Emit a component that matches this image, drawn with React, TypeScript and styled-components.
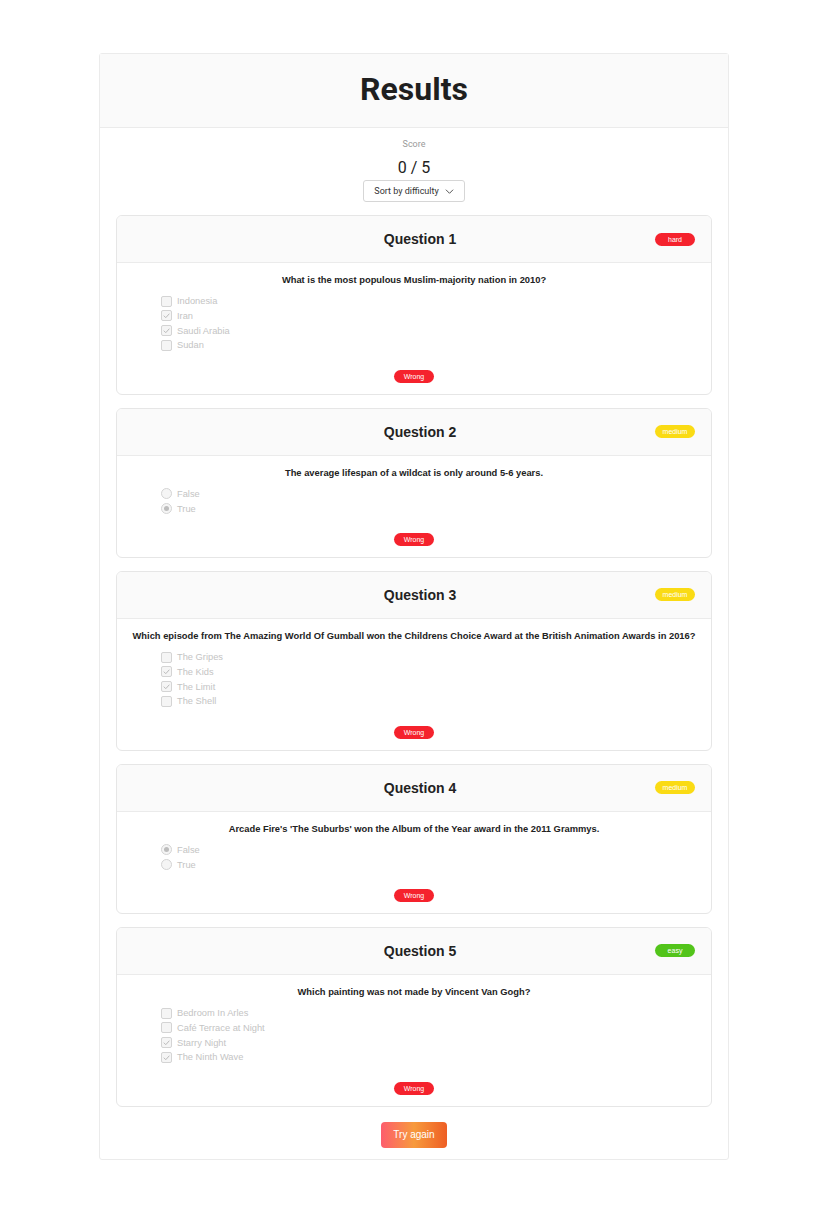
import styled, { createGlobalStyle } from 'styled-components';

type Difficulty = 'easy' | 'medium' | 'hard';

interface Question {
  id: number;
  difficulty: Difficulty;
  text: string;
  kind: 'multiple' | 'boolean';
  options: { label: string; checked: boolean }[];
}

const questions: Question[] = [
  {
    id: 1,
    difficulty: 'hard',
    text: 'What is the most populous Muslim-majority nation in 2010?',
    kind: 'multiple',
    options: [
      { label: 'Indonesia', checked: false },
      { label: 'Iran', checked: true },
      { label: 'Saudi Arabia', checked: true },
      { label: 'Sudan', checked: false },
    ],
  },
  {
    id: 2,
    difficulty: 'medium',
    text: 'The average lifespan of a wildcat is only around 5-6 years.',
    kind: 'boolean',
    options: [
      { label: 'False', checked: false },
      { label: 'True', checked: true },
    ],
  },
  {
    id: 3,
    difficulty: 'medium',
    text: 'Which episode from The Amazing World Of Gumball won the Childrens Choice Award at the British Animation Awards in 2016?',
    kind: 'multiple',
    options: [
      { label: 'The Gripes', checked: false },
      { label: 'The Kids', checked: true },
      { label: 'The Limit', checked: true },
      { label: 'The Shell', checked: false },
    ],
  },
  {
    id: 4,
    difficulty: 'medium',
    text: "Arcade Fire's 'The Suburbs' won the Album of the Year award in the 2011 Grammys.",
    kind: 'boolean',
    options: [
      { label: 'False', checked: true },
      { label: 'True', checked: false },
    ],
  },
  {
    id: 5,
    difficulty: 'easy',
    text: 'Which painting was not made by Vincent Van Gogh?',
    kind: 'multiple',
    options: [
      { label: 'Bedroom In Arles', checked: false },
      { label: 'Café Terrace at Night', checked: false },
      { label: 'Starry Night', checked: true },
      { label: 'The Ninth Wave', checked: true },
    ],
  },
];

const badgeColors: Record<Difficulty | 'wrong', string> = {
  easy: '#52c41a',
  medium: '#fadb14',
  hard: '#f5222d',
  wrong: '#f5222d',
};

export default function App() {
  return (
    <>
      <GlobalStyle />
      <Panel>
        <Header>
          <Title>Results</Title>
        </Header>
        <ScoreBlock>
          <ScoreLabel>Score</ScoreLabel>
          <ScoreValue>0 / 5</ScoreValue>
          <SortButton>
            Sort by difficulty
            <svg width="9" height="9" viewBox="0 0 10 10" fill="none">
              <path d="M1 3l4 4 4-4" stroke="#444" strokeWidth="1" />
            </svg>
          </SortButton>
        </ScoreBlock>
        <List>
          {questions.map((q) => (
            <Card key={q.id}>
              <CardHeader>
                <span />
                <CardTitle>Question {q.id}</CardTitle>
                <Badge $color={badgeColors[q.difficulty]}>{q.difficulty}</Badge>
              </CardHeader>
              <CardBody>
                <QuestionText>{q.text}</QuestionText>
                <Options>
                  {q.options.map((o) => (
                    <Option key={o.label}>
                      {q.kind === 'multiple' ? (
                        <Checkbox>
                          {o.checked && (
                            <svg width="9" height="9" viewBox="0 0 10 10" fill="none">
                              <path d="M2 5.2l2.2 2.2L8.2 3" stroke="#b8b8b8" strokeWidth="1.1" />
                            </svg>
                          )}
                        </Checkbox>
                      ) : (
                        <Radio $checked={o.checked} />
                      )}
                      {o.label}
                    </Option>
                  ))}
                </Options>
                <ResultRow>
                  <Badge $color={badgeColors.wrong}>Wrong</Badge>
                </ResultRow>
              </CardBody>
            </Card>
          ))}
        </List>
        <Footer>
          <TryAgain>Try again</TryAgain>
        </Footer>
      </Panel>
    </>
  );
}

const GlobalStyle = createGlobalStyle`
  body {
    margin: 0;
    background: #fff;
    font-family: "Liberation Sans", Arial, sans-serif;
  }
`;

const Panel = styled.div`
  width: 628px;
  margin: 53px 0 0 99px;
  border: 1px solid #ebebeb;
  border-radius: 3px;
  background: #fff;
`;

const Header = styled.div`
  height: 74px;
  box-sizing: border-box;
  padding-bottom: 4px;
  display: flex;
  align-items: center;
  justify-content: center;
  background: #fafafa;
  border-bottom: 1px solid #ebebeb;
`;

const Title = styled.h1`
  margin: 0;
  font-family: Roboto, sans-serif;
  font-size: 32px;
  font-weight: 700;
  color: #1f1f1f;
`;

const ScoreBlock = styled.div`
  display: flex;
  flex-direction: column;
  align-items: center;
  padding-top: 10px;
  font-family: Roboto, sans-serif;
`;

const ScoreLabel = styled.div`
  font-size: 9px;
  line-height: 12px;
  color: #9a9a9a;
`;

const ScoreValue = styled.div`
  margin-top: 8px;
  font-size: 16px;
  line-height: 20px;
  color: #222;
`;

const SortButton = styled.button`
  display: flex;
  align-items: center;
  gap: 6px;
  height: 22px;
  margin-top: 2px;
  padding: 0 10px;
  border: 1px solid #d6d6d6;
  border-radius: 3px;
  background: #fff;
  font-family: Roboto, sans-serif;
  font-size: 9px;
  color: #333;
`;

const List = styled.div`
  display: flex;
  flex-direction: column;
  gap: 13px;
  padding: 13px 16px 0;
`;

const Card = styled.div`
  border: 1px solid #e6e6e6;
  border-radius: 6px;
  overflow: hidden;
`;

const CardHeader = styled.div`
  height: 46px;
  display: grid;
  grid-template-columns: 1fr auto 1fr;
  align-items: center;
  padding: 0 16px 0 28px;
  background: #fafafa;
  border-bottom: 1px solid #ebebeb;
  & > :last-child {
    justify-self: end;
  }
`;

const CardTitle = styled.div`
  font-size: 14px;
  font-weight: 700;
  color: #222;
`;

const Badge = styled.span<{ $color: string }>`
  width: 40px;
  height: 13px;
  display: inline-flex;
  align-items: center;
  justify-content: center;
  border-radius: 7px;
  background: ${(p) => p.$color};
  color: #fff;
  font-size: 7px;
`;

const CardBody = styled.div`
  padding: 11px 14px 11px;
`;

const QuestionText = styled.div`
  text-align: center;
  white-space: nowrap;
  font-size: 9.35px;
  line-height: 12px;
  font-weight: 700;
  color: #222;
`;

const Options = styled.div`
  display: flex;
  flex-direction: column;
  margin: 8px 0 0 30px;
`;

const Option = styled.div`
  display: flex;
  align-items: center;
  gap: 5px;
  height: 14.67px;
  font-size: 9.3px;
  color: #c4c4c4;
`;

const Checkbox = styled.span`
  width: 11px;
  height: 11px;
  box-sizing: border-box;
  display: inline-flex;
  align-items: center;
  justify-content: center;
  border: 1px solid #d4d4d4;
  border-radius: 2px;
  background: #f5f5f5;
`;

const Radio = styled.span<{ $checked: boolean }>`
  width: 11px;
  height: 11px;
  box-sizing: border-box;
  display: inline-flex;
  align-items: center;
  justify-content: center;
  border: 1px solid #d4d4d4;
  border-radius: 50%;
  background: #f5f5f5;
  &::after {
    content: '';
    width: 5px;
    height: 5px;
    border-radius: 50%;
    background: ${(p) => (p.$checked ? '#bdbdbd' : 'transparent')};
  }
`;

const ResultRow = styled.div`
  display: flex;
  justify-content: center;
  margin-top: 17px;
`;

const Footer = styled.div`
  display: flex;
  justify-content: center;
  padding: 15px 0 11px;
`;

const TryAgain = styled.button`
  width: 66px;
  height: 26px;
  border: none;
  border-radius: 4px;
  background: linear-gradient(90deg, #fd5d6d 0%, #f79a3c 50%, #ee5e24 100%);
  color: #fff;
  font-family: "Liberation Sans", Arial, sans-serif;
  font-size: 10px;
`;
